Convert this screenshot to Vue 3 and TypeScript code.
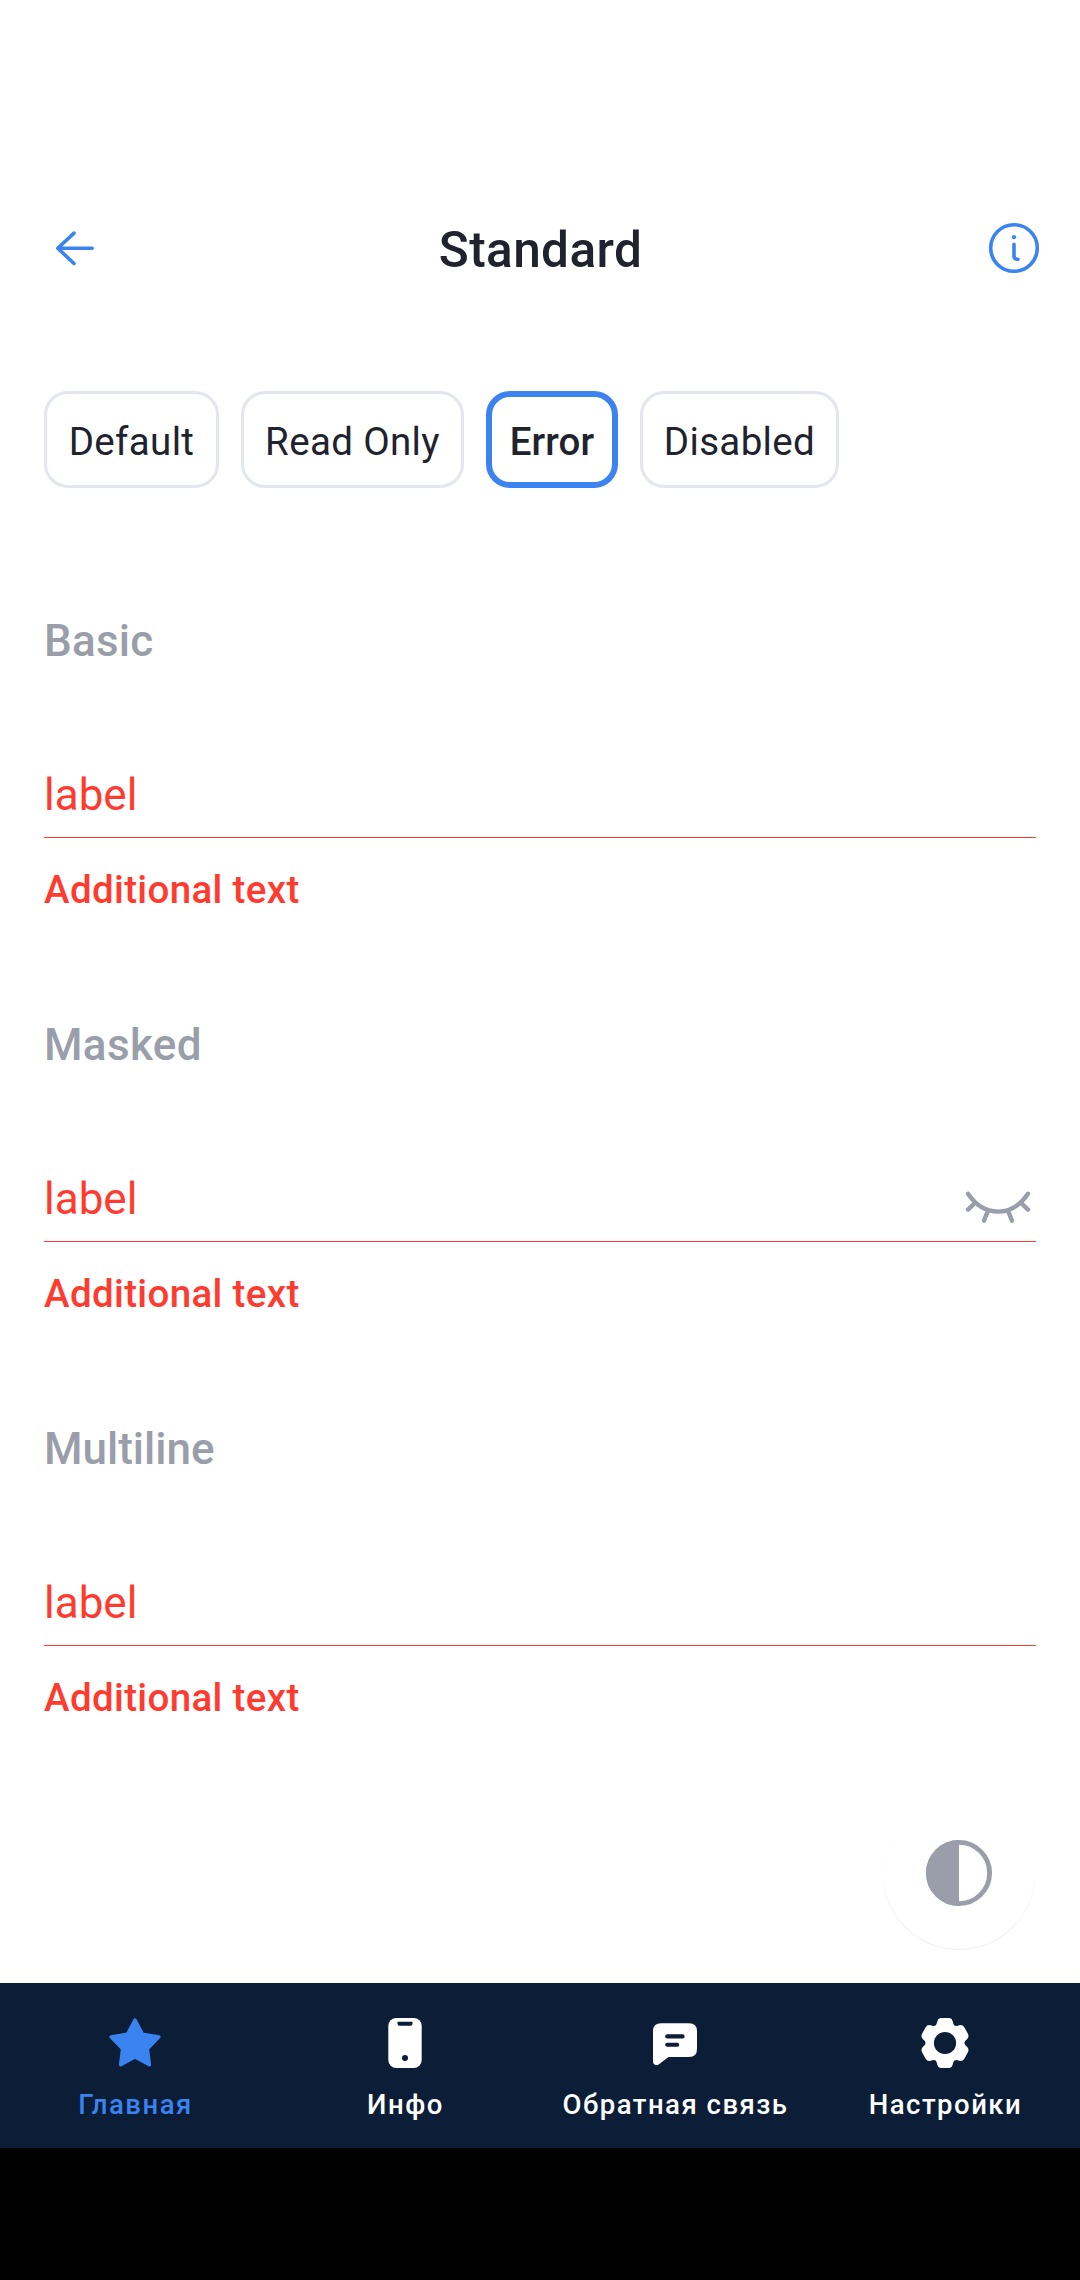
<script setup lang="ts">
interface Chip {
  title: string
  width: number
  active?: boolean
}

interface Field {
  heading: string
  spacing: number
  masked?: boolean
}

const chips: Chip[] = [
  { title: 'Default', width: 175 },
  { title: 'Read Only', width: 223 },
  { title: 'Error', width: 132, active: true },
  { title: 'Disabled', width: 199 },
]

const fields: Field[] = [
  { heading: 'Basic', spacing: 0.2 },
  { heading: 'Masked', spacing: 0.35, masked: true },
  { heading: 'Multiline', spacing: 0 },
]

// Six-tooth gear outline with softened corners, centred on 0,0
function gearPath(): string {
  const pts: [number, number][] = []
  const polar = (r: number, deg: number): [number, number] => {
    const a = (deg * Math.PI) / 180
    return [r * Math.cos(a), r * Math.sin(a)]
  }
  for (let i = 0; i < 6; i++) {
    const a = -90 + i * 60
    pts.push(polar(26.1, a - 16), polar(26.1, a + 16), polar(18.6, a + 30))
  }
  const toward = (p: number[], q: number[], d: number) => {
    const l = Math.hypot(q[0] - p[0], q[1] - p[1])
    return `${(p[0] + ((q[0] - p[0]) * d) / l).toFixed(2)} ${(p[1] + ((q[1] - p[1]) * d) / l).toFixed(2)}`
  }
  const n = pts.length
  return (
    pts
      .map((p, i) => {
        const prev = pts[(i + n - 1) % n]
        const next = pts[(i + 1) % n]
        const d = i % 3 === 2 ? 4 : 3.6
        return `${i ? 'L' : 'M'}${toward(p, prev, d)}Q${p[0].toFixed(2)} ${p[1].toFixed(2)} ${toward(p, next, d)}`
      })
      .join('') + 'Z'
  )
}
const gear = gearPath()
</script>

<template>
  <div class="screen">
    <header class="header">
      <svg class="back" width="66" height="66" viewBox="0 0 66 66">
        <path d="M49.2 33.3H15.5M31 18.1L14.8 33.3L31 48.5" />
      </svg>
      <h1>Standard</h1>
      <svg class="info" width="66" height="66" viewBox="0 0 66 66">
        <circle cx="33" cy="33" r="23.3" />
        <path d="M33 29.2V41.3Q33 44.3 37 44.3" />
        <circle class="dot" cx="33" cy="22.2" r="2.1" />
      </svg>
    </header>

    <div class="chips">
      <button
        v-for="c in chips"
        :key="c.title"
        class="chip"
        :class="{ active: c.active }"
        :style="{ width: c.width + 'px' }"
      >
        {{ c.title }}
      </button>
    </div>

    <main>
      <section v-for="f in fields" :key="f.heading" class="group">
        <h2 :style="{ letterSpacing: f.spacing + 'px' }">{{ f.heading }}</h2>
        <div class="input">
          <span>label</span>
          <svg v-if="f.masked" class="eye" width="66" height="33" viewBox="0 0 66 33">
            <path d="M3 2.8C19 26.5 47 26.5 63 2.8M9.5 12.4L3 18.6M56.5 12.4L63 18.6M22.6 20.6L19 29.6M43.4 20.6L47 29.6" />
          </svg>
        </div>
        <p>Additional text</p>
      </section>
    </main>

    <button class="fab">
      <svg width="66" height="66" viewBox="0 0 66 66">
        <circle cx="33" cy="33" r="30.6" fill="none" stroke="#9a9eaa" stroke-width="4.8" />
        <path d="M33 0A33 33 0 0 0 33 66Z" fill="#9a9eaa" />
      </svg>
    </button>

    <nav class="tabs">
      <a class="tab current">
        <svg width="52" height="50" viewBox="0 0 52 50">
          <path
            d="M26 2L33.6 16.3L49.9 18.9L38.4 30.8L40.4 46.8L26 39.1L11.6 46.8L13.6 30.8L2.1 18.9L18.4 16.3Z"
            fill="#3a83f1" stroke="#3a83f1" stroke-width="3.4" stroke-linejoin="round"
          />
        </svg>
        <span>Главная</span>
      </a>
      <a class="tab">
        <svg width="34" height="50" viewBox="0 0 34 50">
          <rect x="0.3" width="33.4" height="50" rx="8" fill="#fff" />
          <path d="M9.5 3.7H24.5V5.2Q24.5 7.8 21.9 7.8H12.1Q9.5 7.8 9.5 5.2Z" fill="#0b1d37" />
          <circle cx="17" cy="40" r="3" fill="#0b1d37" />
        </svg>
        <span>Инфо</span>
      </a>
      <a class="tab">
        <svg width="44" height="50" viewBox="0 0 44 50">
          <path d="M8 5.3H36Q44 5.3 44 13.3V31Q44 39 36 39H15.5L6 46.2C3.5 48 0 47 0 43.5V13.3Q0 5.3 8 5.3Z" fill="#fff" />
          <path d="M14.2 18.4H29.6M14.2 26.7H24.2" stroke="#0b1d37" stroke-width="4.1" stroke-linecap="round" />
        </svg>
        <span>Обратная связь</span>
      </a>
      <a class="tab">
        <svg width="50" height="50" viewBox="-25 -25 50 50">
          <path :d="gear" fill="#fff" transform="scale(0.97 1)" />
          <circle r="11.1" fill="#0b1d37" />
        </svg>
        <span>Настройки</span>
      </a>
    </nav>
    <div class="system-bar"></div>
  </div>
</template>

<style>
body {
  margin: 0;
  background: #fff;
}
</style>

<style scoped>
.screen {
  display: flex;
  flex-direction: column;
  width: 1080px;
  height: 2280px;
  overflow: hidden;
  background: #fff;
  color: #20232d;
  font-family: Roboto, sans-serif;
}
h1,
h2,
p {
  margin: 0;
}
button {
  font-family: inherit;
  color: inherit;
  background: #fff;
}
svg {
  display: block;
  flex: none;
}
.header {
  display: flex;
  align-items: center;
  justify-content: space-between;
  height: 66px;
  padding: 215px 33px 0 43px;
}
.header h1 {
  margin: 4px 9px 0 0;
  font-size: 49.5px;
  line-height: 62px;
  font-weight: 500;
  letter-spacing: 0.4px;
}
.back path,
.info {
  fill: none;
  stroke: #3a83f1;
  stroke-width: 3.6px;
  stroke-linecap: round;
  stroke-linejoin: round;
}
.info .dot {
  fill: #3a83f1;
  stroke: none;
}
.chips {
  display: flex;
  gap: 22px;
  margin: 110px 44px 0;
}
.chip {
  box-sizing: border-box;
  height: 97px;
  padding: 5px 0 0;
  border: 3px solid #e3e6ee;
  border-radius: 24px;
  font-size: 38.5px;
  line-height: 50px;
  letter-spacing: 0.35px;
  white-space: nowrap;
}
.chip.active {
  border: 6px solid #3a83f1;
  font-weight: 500;
  letter-spacing: 0.1px;
}
main {
  padding: 119px 44px 0;
}
.group {
  height: 404px;
}
.group h2 {
  padding-top: 6px;
  font-size: 44px;
  line-height: 56px;
  font-weight: 500;
  color: #9a9eaa;
}
.input {
  display: flex;
  align-items: center;
  justify-content: space-between;
  height: 84px;
  margin-top: 84px;
  padding-right: 5.5px;
  border-bottom: 1px solid #ff3b30;
}
.input span,
.group p {
  color: #ff3b30;
}
.input span {
  font-size: 44px;
  line-height: 56px;
}
.eye {
  margin-top: 16px;
}
.eye path {
  fill: none;
  stroke: #9a9eaa;
  stroke-width: 4.4px;
  stroke-linecap: round;
  stroke-linejoin: round;
}
.group p {
  padding-top: 27px;
  font-size: 38.5px;
  line-height: 50px;
  font-weight: 500;
  letter-spacing: 0.35px;
}
.fab {
  display: flex;
  align-items: center;
  justify-content: center;
  align-self: flex-end;
  width: 152px;
  height: 152px;
  margin: -22px 45px 34px 0;
  padding: 0;
  border: 0;
  border-radius: 50%;
  box-shadow: 0 1px 1px rgba(0, 0, 0, 0.07);
}
.tabs {
  display: flex;
  height: 165px;
  background: #0b1d37;
  color: #fff;
}
.tab {
  display: flex;
  flex: 1;
  flex-direction: column;
  align-items: center;
  gap: 19px;
  padding-top: 35px;
}
.tab.current {
  color: #3a83f1;
}
.tab span {
  padding-left: 1px;
  font-size: 27.5px;
  line-height: 36px;
  font-weight: 500;
  letter-spacing: 1.5px;
  white-space: nowrap;
}
.system-bar {
  flex: 1;
  background: #000;
}
</style>
